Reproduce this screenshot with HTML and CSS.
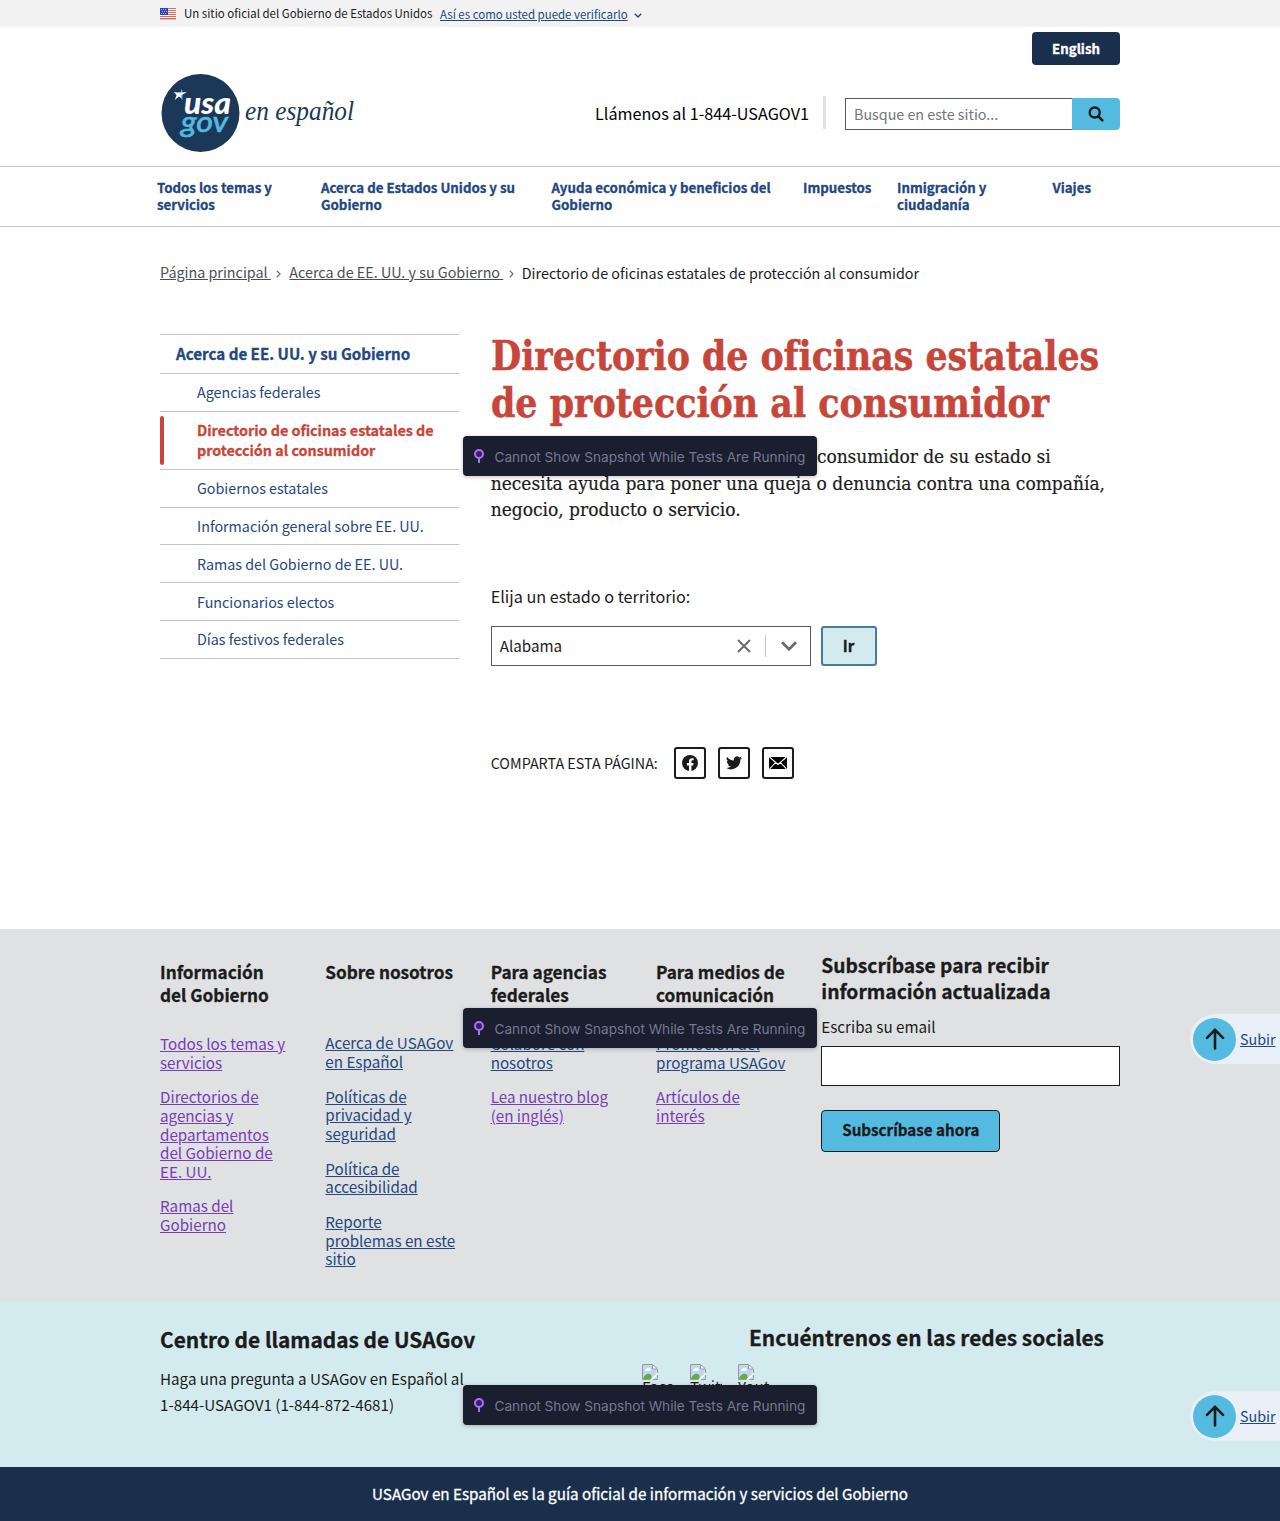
FILE: index.html
```html
<!DOCTYPE html>
<html lang="es">
<head>
<meta charset="utf-8">
<title>Directorio de oficinas estatales de protección al consumidor</title>
<link rel="stylesheet" href="styles.css">
</head>
<body>
<svg class="defs" width="0" height="0" aria-hidden="true">
  <symbol id="pin" viewBox="0 0 10 15"><circle cx="5" cy="5" r="4" fill="#3b1d6e" stroke="#a277f0" stroke-width="2"/><path d="M5 9v5" stroke="#a277f0" stroke-width="2"/></symbol>
  <symbol id="up" viewBox="0 0 20 22"><path d="M10 20.500V2M2 9.800L10 1.800l8 8" fill="none" stroke="#1b1b1b" stroke-width="2.600" stroke-linecap="round"/></symbol>
  <symbol id="broken" viewBox="0 0 16 16"><path d="M1 1h9l4.500 4.500V15H1z" fill="#c3d5f3"/><path d="M3 6.500a1.800 1.800 0 0 1 2-2 2 2 0 0 1 3.600 1A1.300 1.300 0 0 1 8 7H3.300z" fill="#fff"/><path d="M1 15c1-4 4-6 7-5 2 .7 2 3 1 5z" fill="#5fb041"/><path d="M8.500 15.500L15.500 8.500V11L11 15.500z" fill="#fff"/><path d="M10.500.5V5H15z" fill="#fff"/><path d="M.5 15.500V.5h10L15.500 5v4M10.500.5V5H15M.5 15.500h8M15.500 11v4.500h-4.500" fill="none" stroke="#999"/></symbol>
</svg>

<div class="banner">
  <div class="wrap banner-in">
    <svg class="flag" width="16" height="12" viewBox="0 0 16 12"><path fill="#fff" d="M0 0h16v12H0z"/><path fill="#db6a5a" d="M0 0h16v1H0zM0 2h16v1H0zM0 4h16v1H0zM0 6h16v1H0zM0 8h16v1H0zM0 10h16v1.500H0z"/><path fill="#2a41c0" d="M0 0h8v7H0z"/><path fill="#b9c2f2" d="M1 1h1v1H1zM3 1h1v1H3zM5 1h1v1H5zM2 3h1v1H2zM4 3h1v1H4zM6 3h1v1H6zM1 5h1v1H1zM3 5h1v1H3zM5 5h1v1H5z"/></svg>
    <span class="banner-text">Un sitio oficial del Gobierno de Estados Unidos</span>
    <a class="banner-link">Así es como usted puede verificarlo</a>
    <svg class="banner-chev" width="8" height="5" viewBox="0 0 8 5"><path d="M.8.8L4 4 7.200.8" fill="none" stroke="#23477f" stroke-width="1.400"/></svg>
  </div>
</div>

<header class="wrap header">
  <div class="lang-row"><a class="lang">English</a></div>
  <div class="brand-row">
    <svg class="logo" width="200" height="80" viewBox="160 73 200 80">
      <circle cx="200.500" cy="113" r="39" fill="#1b3859"/>
      <path d="M181.800 88.500l.9 4-.3 7.500-3-3.500-1.500-4.200h2.600z" fill="#54bae0"/>
      <path d="M174 92l5.500.7 7.500-.6-5.600 3.200-.4 2.500-2-1.300-4.300 3.500 1.900-4.800z" fill="#fff"/>
      <text class="l-usa" x="184" y="114" textLength="47" lengthAdjust="spacingAndGlyphs">usa</text>
      <text class="l-gov" x="181" y="131.500" textLength="47" lengthAdjust="spacingAndGlyphs">gov</text>
      <text class="l-esp" x="245" y="120" textLength="109" lengthAdjust="spacingAndGlyphs">en español</text>
    </svg>
    <span class="phone">Llámenos al 1-844-USAGOV1</span>
    <form class="search">
      <span class="search-input">Busque en este sitio...</span>
      <span class="search-btn"><svg width="16" height="16" viewBox="0 0 16 16"><circle cx="6.700" cy="6.500" r="5" fill="none" stroke="#1b1b1b" stroke-width="2.400"/><path d="M10.300 10.300L14.300 14.300" stroke="#1b1b1b" stroke-width="2.600" stroke-linecap="round"/></svg></span>
    </form>
  </div>
</header>

<nav class="nav">
  <div class="nav-in">
    <a>Todos los temas y<br>servicios</a>
    <a>Acerca de Estados Unidos y su<br>Gobierno</a>
    <a>Ayuda económica y beneficios del<br>Gobierno</a>
    <a>Impuestos</a>
    <a>Inmigración y<br>ciudadanía</a>
    <a>Viajes</a>
  </div>
</nav>

<div class="wrap crumbs">
  <a class="c1">Página principal&nbsp;</a>
  <svg width="5" height="8" viewBox="0 0 5 8"><path d="M.8.8L4 4 .8 7.200" fill="none" stroke="#71767a" stroke-width="1.300"/></svg>
  <a class="c2">Acerca de EE. UU. y su Gobierno&nbsp;</a>
  <svg width="5" height="8" viewBox="0 0 5 8"><path d="M.8.8L4 4 .8 7.200" fill="none" stroke="#71767a" stroke-width="1.300"/></svg>
  <span class="c3">Directorio de oficinas estatales de protección al consumidor</span>
</div>

<main class="wrap main">
  <ul class="side">
    <li class="side-top">Acerca de EE. UU. y su Gobierno</li>
    <li>Agencias federales</li>
    <li class="current">Directorio de oficinas estatales de<br>protección al consumidor</li>
    <li>Gobiernos estatales</li>
    <li>Información general sobre EE. UU.</li>
    <li>Ramas del Gobierno de EE. UU.</li>
    <li>Funcionarios electos</li>
    <li>Días festivos federales</li>
  </ul>
  <div class="content">
    <h1><span class="h-a">Directorio de oficinas estatales</span><span class="h-b">de protección al consumidor</span></h1>
    <p class="intro"><span class="i-a">Contacte a la oficina de protección al consumidor de su estado si</span><span class="i-b">necesita ayuda para poner una queja o denuncia contra una compañía,</span><span class="i-c">negocio, producto o servicio.</span></p>
    <div class="label">Elija un estado o territorio:</div>
    <div class="picker">
      <div class="select">
        <span class="select-val">Alabama</span>
        <svg width="14" height="14" viewBox="0 0 14 14"><path d="M1 1l12 12M13 1L1 13" stroke="#6b6b6b" stroke-width="2"/></svg>
        <i class="select-sep"></i>
        <svg width="16" height="10" viewBox="0 0 16 10"><path d="M1 1.200L8 8.200l7-7" fill="none" stroke="#6b6b6b" stroke-width="2.800"/></svg>
      </div>
      <a class="go">Ir</a>
    </div>
    <div class="share">
      <span class="share-label">COMPARTA ESTA PÁGINA:</span>
      <a class="share-box"><svg width="16" height="16" viewBox="0 0 16 16"><circle cx="8" cy="8" r="8" fill="#1b1b1b"/><path d="M7 16v-5.600H5V8h2V6.300C7 4.300 8.200 3.200 10 3.200c.9 0 1.600.1 1.600.1v2h-1c-1 0-1.200.6-1.200 1.200V8h2.100l-.3 2.400H9.400V16z" fill="#fff"/></svg></a>
      <a class="share-box"><svg width="16" height="14" viewBox="0 0 24 20"><path d="M24 2.400a10 10 0 0 1-2.800.8A5 5 0 0 0 23.300.4a10 10 0 0 1-3.100 1.200 4.900 4.900 0 0 0-8.400 4.500A14 14 0 0 1 1.700.9a4.900 4.900 0 0 0 1.500 6.600 5 5 0 0 1-2.200-.6 4.900 4.900 0 0 0 3.900 4.900 5 5 0 0 1-2.200.1 4.900 4.900 0 0 0 4.600 3.400A9.900 9.900 0 0 1 0 17.300a14 14 0 0 0 21.500-12.400A10 10 0 0 0 24 2.400z" fill="#1b1b1b"/></svg></a>
      <a class="share-box"><svg width="18" height="12" viewBox="0 0 18 12"><path fill="#000" d="M0 0h18v12H0z"/><path d="M.5 0L9 7.500 17.500 0M.5 12L6.500 5.500M17.500 12L11.500 5.500" fill="none" stroke="#fff" stroke-width="1.100"/></svg></a>
    </div>
  </div>
</main>

<section class="links">
  <div class="wrap grid">
    <div class="col"><h3>Información<br>del Gobierno</h3>
      <a class="v">Todos los temas y<br>servicios</a><a class="v">Directorios de<br>agencias y<br>departamentos<br>del Gobierno de<br>EE. UU.</a><a class="v">Ramas del<br>Gobierno</a></div>
    <div class="col col-about"><h3>Sobre nosotros</h3>
      <a>Acerca de USAGov<br>en Español</a><a>Políticas de<br>privacidad y<br>seguridad</a><a>Política de<br>accesibilidad</a><a>Reporte<br>problemas en este<br>sitio</a></div>
    <div class="col"><h3>Para agencias<br>federales</h3>
      <a>Colabore con<br>nosotros</a><a class="v">Lea nuestro blog<br>(en inglés)</a></div>
    <div class="col"><h3>Para medios de<br>comunicación</h3>
      <a>Promoción del<br>programa USAGov</a><a class="v">Artículos de<br>interés</a></div>
    <div class="sub">
      <h2>Subscríbase para recibir<br>información actualizada</h2>
      <label>Escriba su email</label>
      <div class="email"></div>
      <a class="sub-btn">Subscríbase ahora</a>
    </div>
  </div>
</section>

<section class="contact">
  <div class="wrap contact-in">
    <div class="call">
      <h2>Centro de llamadas de USAGov</h2>
      <p>Haga una pregunta a USAGov en Español al<br><span>1-844-USAGOV1 (1-844-872-4681)</span></p>
    </div>
    <div class="social">
      <h2>Encuéntrenos en las redes sociales</h2>
      <div class="social-row">
        <div class="soc"><svg width="16" height="16"><use href="#broken"/></svg><span>Facebook</span></div>
        <div class="soc"><svg width="16" height="16"><use href="#broken"/></svg><span>Twitter</span></div>
        <div class="soc"><svg width="16" height="16"><use href="#broken"/></svg><span>Youtube</span></div>
      </div>
    </div>
  </div>
</section>

<footer class="bottom"><span>USAGov en Español es la guía oficial de información y servicios del Gobierno</span></footer>

<div class="snap snap-1"><svg width="10" height="15"><use href="#pin"/></svg><span>Cannot Show Snapshot While Tests Are Running</span></div>
<div class="snap snap-2"><svg width="10" height="15"><use href="#pin"/></svg><span>Cannot Show Snapshot While Tests Are Running</span></div>
<div class="snap snap-3"><svg width="10" height="15"><use href="#pin"/></svg><span>Cannot Show Snapshot While Tests Are Running</span></div>
<div class="top top-1"><span class="top-dot"><svg width="20" height="22"><use href="#up"/></svg></span><a>Subir</a></div>
<div class="top top-2"><span class="top-dot"><svg width="20" height="22"><use href="#up"/></svg></span><a>Subir</a></div>
</body>
</html>
```
FILE: styles.css
```css
* { box-sizing: border-box; }
html, body { margin: 0; padding: 0; }
body {
  position: relative; width: 1280px; height: 1521px; overflow: hidden;
  background: #fff; color: #1b1b1b;
  font-family: "Noto Sans CJK SC", "Noto Sans", sans-serif;
  font-size: 15.2px; line-height: 20px; font-kerning: normal;
}
h1, h2, h3, p, ul { margin: 0; padding: 0; list-style: none; }
svg { display: block; flex: none; }
.defs { position: absolute; }
.wrap { width: 960px; margin: 0 auto; }
a, span, label { white-space: nowrap; }
h2, h3, .lang, .nav a, .side-top, .current, .go, .sub-btn { -webkit-text-stroke: .3px; }

.banner { height: 27px; background: #f2f2f2; }
.banner-in { display: flex; align-items: center; height: 27px; font-size: 11.470px; }
.flag { margin: 1px 8px 0 0; }
.banner-text { width: 256px; margin-top: -2px; }
.banner-link { color: #23477f; text-decoration: underline; }
.banner-chev { margin: 4px 0 0 6px; }

.header { height: 139px; padding-top: 5px; }
.lang-row { display: flex; justify-content: flex-end; }
.lang { width: 88px; height: 33px; border-radius: 4px; background: #192f4c; color: #fff; font-weight: 700; font-size: 13.300px; line-height: 33px; text-align: center; }
.brand-row { display: flex; height: 80px; margin-top: 8px; }
.logo { width: 200px; margin-right: 235px; }
.l-usa { font: italic 900 31px Lato, sans-serif; fill: #fff; }
.l-gov { font: italic 400 29px Lato, sans-serif; fill: #54bae0; stroke: #54bae0; stroke-width: .7px; }
.l-esp { font: italic 400 27px "Liberation Serif", serif; fill: #1b3859; }
.phone { width: 231px; height: 33px; margin: 23px 19px 0 0; border-right: 3px solid #dfe1e2; font-size: 16.200px; line-height: 35px; color: #000; }
.search { display: flex; margin-top: 25px; height: 32px; }
.search-input { width: 227px; border: 1px solid #565c65; border-right: 0; padding-left: 8px; color: #757575; line-height: 30px; font-size: 14.300px; }
.search-btn { display: flex; align-items: center; justify-content: center; width: 48px; background: #54bae0; border-radius: 0 4px 4px 0; }

.nav { height: 61px; border-top: 1px solid #c3c3c3; border-bottom: 1px solid #c3c3c3; }
.nav-in { display: grid; grid-template-columns: 164px 230.500px 251.500px 94px 155.500px 70px; width: 966px; margin-left: 157px; padding-top: 12px; }
.nav a { color: #23477f; font-weight: 700; font-size: 13.290px; line-height: 17px; }

.crumbs { display: flex; align-items: center; height: 22px; margin-top: 34px; color: #1b1b1b; }
.crumbs a { color: #4b4f55; text-decoration: underline; }
.crumbs a, .crumbs span { font-size: 14.340px; }
.crumbs svg { margin: 3px 8px 0 5.500px; }
.crumbs .c3 { padding-top: 1px; }

.main { display: grid; grid-template-columns: 298.700px 629px; column-gap: 32px; margin-top: 51px; height: 595px; align-items: start; }
.side { border-bottom: 1px solid #c3c3c3; }
.side li { border-top: 1px solid #c3c3c3; padding: 8.420px 0 8.420px 37px; color: #23477f; font-size: 14.300px; line-height: 20px; white-space: nowrap; }
.side .side-top { padding: 8px 0 10px 16px; font-weight: 700; font-size: 15.150px; }
.side .side-top + li { padding-top: 8px; padding-bottom: 9px; }
.side .current { position: relative; color: #c7463b; font-weight: 700; }
.current::before { content: ""; position: absolute; left: 0; top: 4px; bottom: 4px; width: 4px; border-radius: 4px; background: #c7463b; }

h1 { color: #c7463b; font: 700 41px/47px "DejaVu Serif Condensed", "DejaVu Serif", serif; font-stretch: condensed; margin-top: -1px; -webkit-text-stroke: .5px; }
h1 span { display: block; width: max-content; transform-origin: 0 50%; transform: scaleX(.942); }
h1 .h-b { transform: scaleX(.945); }
.intro { margin-top: 16px; font: 400 18.980px/26.700px "DejaVu Serif Condensed", "DejaVu Serif", serif; font-stretch: condensed; -webkit-text-stroke: .2px; }
.intro span { display: block; width: max-content; }
.intro .i-a { letter-spacing: -.06px; }
.label { margin-top: 61px; font-size: 16.200px; line-height: 24px; }
.picker { display: flex; gap: 10px; margin-top: 18px; }
.select { display: flex; align-items: center; width: 320px; height: 40px; border: 1px solid #565c65; padding: 0 13px 0 8px; }
.select-val { flex: 1; padding-bottom: 2px; }
.select-sep { width: 1px; height: 22px; margin: 0 15px 0 14px; background: #c3c3c3; }
.go { width: 56px; height: 40px; border: 2px solid #457b9d; border-radius: 3px; background: #d3ebef; font-weight: 700; line-height: 35px; text-align: center; }
.share { display: flex; align-items: center; gap: 12px; margin-top: 81px; height: 32px; }
.share-label { width: 171px; font-size: 14.330px; }
.share-box { display: flex; align-items: center; justify-content: center; width: 32px; height: 32px; border: 2px solid #1b1b1b; border-radius: 3px; }

.links { height: 372px; background: #dfe1e2; }
.grid { display: grid; grid-template-columns: repeat(4, 133.330px) 298.700px; column-gap: 32px; }
.col { display: flex; flex-direction: column; gap: 15.800px; padding-top: 31px; }
.col h3 { height: 58.300px; font-size: 17.160px; line-height: 23px; white-space: nowrap; }
.col.col-about { gap: 16px; }
.col-about h3 { height: 57.300px; }
.col a { color: #23477f; text-decoration: underline; line-height: 18.660px; }
.col a.v { color: #783cb9; }
.sub { padding-top: 23px; }
.sub h2 { font-size: 19.220px; line-height: 26px; white-space: nowrap; }
.sub label { display: block; margin-top: 11px; line-height: 22px; }
.email { height: 40px; margin-top: 9px; border: 1px solid #1b1b1b; background: #fff; }
.sub-btn { display: block; width: 179px; height: 42px; margin-top: 24px; border: 1px solid #1b1b1b; border-radius: 4px; background: #54bae0; font-weight: 700; line-height: 37.500px; text-align: center; }

.contact { height: 166px; background: #d3ebef; }
.contact-in { display: flex; }
.call { width: 482px; padding-top: 24px; }
.contact h2 { font-size: 20.870px; line-height: 28px; white-space: nowrap; }
.call p { margin-top: 12px; line-height: 26px; }
.social { padding-top: 22px; }
.social h2 { margin-left: 107px; }
.social-row { display: flex; gap: 16px; margin-top: 13px; }
.soc { width: 32px; height: 40px; overflow: hidden; line-height: 12px; }

.bottom { height: 54px; background: #192f4c; color: #fff; text-align: center; line-height: 52px; -webkit-text-stroke: .3px; }

.snap { position: absolute; left: 463px; display: flex; align-items: center; width: 354px; height: 40px; padding-left: 11px; border-radius: 4px; background: #1b1e2e; box-shadow: 0 1px 4px rgba(0, 0, 0, .25); color: #747994; font-family: Inter, sans-serif; font-size: 13.620px; }
.snap span { margin: 2px 0 0 10.500px; }
.snap-1 { top: 436px; }
.snap-2 { top: 1008px; }
.snap-3 { top: 1385px; }

.top { position: absolute; left: 1190px; display: flex; align-items: center; gap: 4px; width: 90px; height: 50px; padding-left: 3px; border-radius: 25px 0 0 25px; background: #e8eff7; }
.top-dot { display: flex; align-items: center; justify-content: center; width: 43px; height: 43px; border-radius: 50%; background: #54bae0; }
.top a { color: #23477f; text-decoration: underline; font-size: 14.300px; }
.top-1 { top: 1014px; }
.top-2 { top: 1391px; }
```
